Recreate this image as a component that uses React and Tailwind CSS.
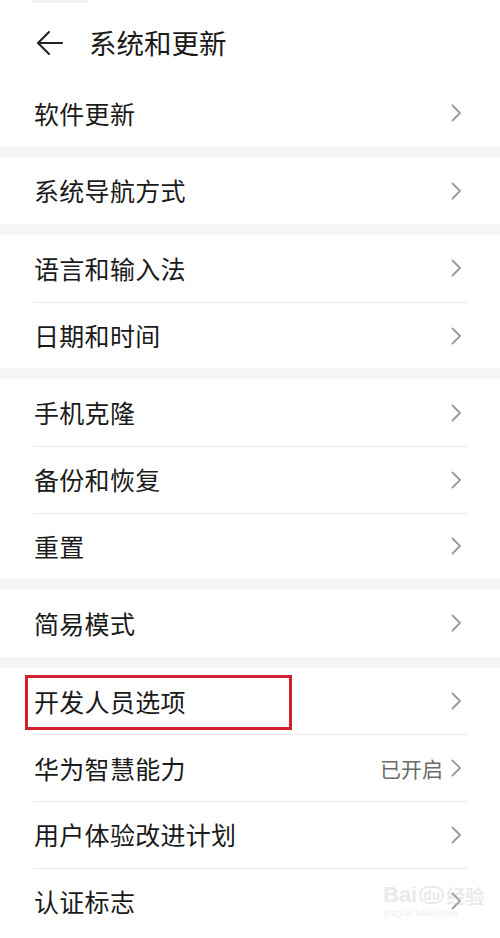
import React from "react";

const Chevron = () => (
  <svg width="11" height="18" viewBox="0 0 11 18" fill="none" className="shrink-0">
    <polyline points="1.5,1.5 9,9 1.5,16.5" stroke="#9a9a9a" strokeWidth="1.8" strokeLinecap="round" strokeLinejoin="round" />
  </svg>
);

const Row = ({ label, value, first, highlight }) => (
  <div className={`relative mx-[33px] h-[66.6px] flex items-center justify-between pl-[1px] pr-[5px] ${first ? "" : "border-t border-[#e9e9e9]"}`}>
    <span className="text-[25px] leading-none text-[#1a1a1a] tracking-[0.3px]">{label}</span>
    <div className="flex items-center gap-[8px]">
      {value && <span className="text-[21px] leading-none text-[#6b6b6b]">{value}</span>}
      <Chevron />
    </div>
    {highlight && (
      <div className="absolute left-[-8px] top-[7px] w-[267px] h-[55px] border-[3px] border-[#d3202f]" />
    )}
  </div>
);

const Band = () => <div className="h-[11px] bg-[#f5f5f5]" />;

export default function App() {
  return (
    <div
      className="w-[500px] h-[938px] overflow-hidden bg-white relative"
      style={{ fontFamily: '"Noto Sans CJK SC", "Noto Sans", sans-serif' }}
    >
      <div className="h-[80px] relative">
        <div className="absolute left-[32px] top-0 w-[56px] h-[3px] bg-[#f1f1f1]" />
        <div className="flex items-center h-full pl-[36px] pt-[5px]">
          <svg width="28" height="26" viewBox="0 0 28 26" fill="none" className="shrink-0">
            <path d="M26 13H2.5M13 2L2 13l11 11" stroke="#222" strokeWidth="2.1" strokeLinecap="round" strokeLinejoin="round" />
          </svg>
          <span className="ml-[25px] text-[27.5px] leading-none text-[#1a1a1a]">系统和更新</span>
        </div>
      </div>

      <Row label="软件更新" first />
      <Band />
      <Row label="系统导航方式" first />
      <Band />
      <Row label="语言和输入法" first />
      <Row label="日期和时间" />
      <Band />
      <Row label="手机克隆" first />
      <Row label="备份和恢复" />
      <Row label="重置" />
      <Band />
      <Row label="简易模式" first />
      <Band />
      <Row label="开发人员选项" first highlight />
      <Row label="华为智慧能力" value="已开启" />
      <Row label="用户体验改进计划" />
      <Row label="认证标志" />

      <div className="absolute left-[383px] top-[884px] flex flex-col items-start opacity-30 pointer-events-none">
        <div className="flex items-center text-[#bdbdbd] leading-none">
          <span className="text-[22px] font-bold" style={{ fontFamily: '"Liberation Sans", sans-serif' }}>Bai</span>
          <span className="ml-[2px] text-[14px] font-bold rounded-full border-2 border-[#bdbdbd] px-[2px]" style={{ fontFamily: '"Liberation Sans", sans-serif' }}>du</span>
          <span className="ml-[2px] text-[19px] font-bold">经验</span>
        </div>
        <span className="mt-[2px] text-[10px] text-[#c8c8c8] leading-none" style={{ fontFamily: '"Liberation Serif", serif' }}>jingyan.baidu.com</span>
      </div>
    </div>
  );
}
